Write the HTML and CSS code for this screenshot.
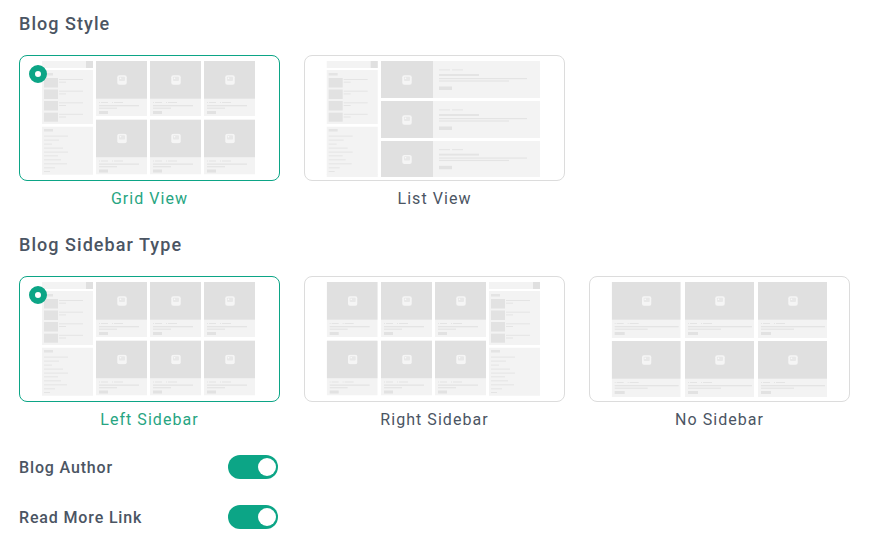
FILE: index.html
```html
<!DOCTYPE html>
<html>

<head>
    <title>Blog Settings</title>
    <link rel="stylesheet" href="styles.css">
</head>

<body>
    <!-- shared pieces of the layout thumbnails -->
    <svg class="sprite" xmlns="http://www.w3.org/2000/svg">
        <symbol id="pic" viewBox="0 0 10 10">
            <rect x="0.3" y="0.3" width="9.4" height="9.4" rx="2" fill="#f5f5f5" />
            <rect x="2" y="1.800" width="6" height="4.2" rx="0.8" fill="#e8e8e8" />
            <circle cx="3.5" cy="3.300" r="0.8" fill="#fafafa" />
        </symbol>

        <symbol id="side" viewBox="0 0 51 116" overflow="visible">
            <rect width="51" height="7" fill="#f3f3f3" />
            <rect x="44" width="7" height="7" fill="#e0e0e0" />
            <rect y="9" width="51" height="54" fill="#f3f3f3" />
            <rect x="2" y="12" width="9" height="2.5" fill="#e4e4e4" />
            <rect x="2" y="17" width="14" height="9.5" fill="#e2e2e2" />
            <rect x="17" y="18" width="24" height="1" fill="#e4e4e4" />
            <rect x="17" y="20.7" width="7" height="1" fill="#e4e4e4" />
            <rect x="2" y="28.5" width="14" height="9.5" fill="#e2e2e2" />
            <rect x="17" y="29.7" width="24" height="1" fill="#e4e4e4" />
            <rect x="17" y="32.4" width="7" height="1" fill="#e4e4e4" />
            <rect x="2" y="40" width="14" height="9.5" fill="#e2e2e2" />
            <rect x="17" y="41.3" width="24" height="1" fill="#e4e4e4" />
            <rect x="17" y="44" width="7" height="1" fill="#e4e4e4" />
            <rect x="2" y="51.7" width="14" height="9" fill="#e2e2e2" />
            <rect x="17" y="52.8" width="24" height="1" fill="#e4e4e4" />
            <rect x="17" y="55.5" width="7" height="1" fill="#e4e4e4" />
            <rect y="65.7" width="51" height="48" fill="#f3f3f3" />
            <rect x="2" y="68" width="9" height="2.5" fill="#e4e4e4" />
            <rect x="2" y="74.6" width="24" height="1" fill="#e4e4e4" />
            <rect x="2" y="78.6" width="15" height="1" fill="#e4e4e4" />
            <rect x="2" y="82.6" width="8" height="1" fill="#e4e4e4" />
            <rect x="2" y="86.6" width="19" height="1" fill="#e4e4e4" />
            <rect x="2" y="90.6" width="24" height="1" fill="#e4e4e4" />
            <rect x="2" y="94.3" width="14" height="1" fill="#e4e4e4" />
            <rect x="2" y="98.3" width="17" height="1" fill="#e4e4e4" />
            <rect x="2" y="102.3" width="23" height="1" fill="#e4e4e4" />
            <rect x="2" y="106.3" width="11" height="1" fill="#e4e4e4" />
            <rect x="2" y="110" width="6" height="1" fill="#e4e4e4" />
        </symbol>

        <symbol id="post" viewBox="0 0 51 55">
            <rect width="51" height="55" fill="#f3f3f3" />
            <rect width="51" height="37.7" fill="#e0e0e0" />
            <use href="#pic" x="21" y="14" width="10" height="10" />
            <rect x="3" y="41" width="1" height="1" fill="#e4e4e4" />
            <rect x="5" y="41" width="7" height="1" fill="#e4e4e4" />
            <rect x="16" y="41" width="1" height="1" fill="#e4e4e4" />
            <rect x="18" y="41" width="9" height="1" fill="#e4e4e4" />
            <rect x="3" y="44" width="40" height="1.3" fill="#e4e4e4" />
            <rect x="3" y="46.6" width="18" height="1.2" fill="#e4e4e4" />
            <rect x="3" y="50" width="9" height="3" fill="#e2e2e2" />
        </symbol>

        <symbol id="post-wide" viewBox="0 0 69 56">
            <rect width="69" height="56" fill="#f3f3f3" />
            <rect width="69" height="37.7" fill="#e0e0e0" />
            <use href="#pic" x="30" y="14" width="10" height="10" />
            <rect x="3" y="41" width="1" height="1" fill="#e4e4e4" />
            <rect x="5" y="41" width="7" height="1" fill="#e4e4e4" />
            <rect x="16" y="41" width="1" height="1" fill="#e4e4e4" />
            <rect x="18" y="41" width="9" height="1" fill="#e4e4e4" />
            <rect x="3" y="44" width="64" height="1.3" fill="#e4e4e4" />
            <rect x="3" y="46.6" width="33" height="1.2" fill="#e4e4e4" />
            <rect x="3" y="50" width="10" height="3" fill="#e2e2e2" />
        </symbol>

        <symbol id="row" viewBox="0 0 159 37" preserveAspectRatio="none">
            <rect width="159" height="37" fill="#f3f3f3" />
            <rect width="52" height="37" fill="#e0e0e0" />
            <use href="#pic" x="21" y="14" width="10" height="10" />
            <rect x="58" y="8.4" width="11" height="1" fill="#e4e4e4" />
            <rect x="71" y="8.4" width="11" height="1" fill="#e4e4e4" />
            <rect x="58" y="13" width="40" height="2" fill="#e4e4e4" />
            <rect x="58" y="17" width="88" height="1.2" fill="#e4e4e4" />
            <rect x="58" y="19.4" width="70" height="1.2" fill="#e4e4e4" />
            <rect x="58" y="25.5" width="13" height="3.5" fill="#e2e2e2" />
        </symbol>

        <symbol id="thumb-left" viewBox="0 0 261 126">
            <use href="#side" x="23" y="6" width="51" height="116" />
            <use href="#post" x="77" y="6" width="51" height="55" />
            <use href="#post" x="131" y="6" width="51" height="55" />
            <use href="#post" x="185" y="6" width="51" height="55" />
            <use href="#post" x="77" y="64.5" width="51" height="55" />
            <use href="#post" x="131" y="64.5" width="51" height="55" />
            <use href="#post" x="185" y="64.5" width="51" height="55" />
        </symbol>

        <symbol id="thumb-right" viewBox="0 0 261 126">
            <use href="#post" x="22.700" y="6" width="51" height="55" />
            <use href="#post" x="77" y="6" width="51" height="55" />
            <use href="#post" x="131" y="6" width="51" height="55" />
            <use href="#post" x="22.700" y="64.500" width="51" height="55" />
            <use href="#post" x="77" y="64.500" width="51" height="55" />
            <use href="#post" x="131" y="64.500" width="51" height="55" />
            <use href="#side" x="185" y="6" width="51" height="116" />
        </symbol>
    </svg>

    <main class="page">
        <h2 class="group-title">Blog Style</h2>
        <div class="options">
            <div class="option option-active">
                <div class="thumb">
                    <span class="radio"></span>
                    <svg class="thumb-art" viewBox="0 0 261 126"><use href="#thumb-left" width="261" height="126" /></svg>
                </div>
                <div class="option-label">Grid View</div>
            </div>
            <div class="option">
                <div class="thumb">
                    <svg class="thumb-art" viewBox="0 0 261 126">
                        <use href="#side" x="22.700" y="6" width="51" height="116" />
                        <rect x="22.700" y="119" width="51" height="3" fill="#f3f3f3" />
                        <use href="#row" x="77" y="6" width="159" height="37" />
                        <use href="#row" x="77" y="46" width="159" height="37" />
                        <use href="#row" x="77" y="86" width="159" height="36" />
                    </svg>
                </div>
                <div class="option-label">List View</div>
            </div>
        </div>

        <h2 class="group-title group-title-next">Blog Sidebar Type</h2>
        <div class="options">
            <div class="option option-active">
                <div class="thumb">
                    <span class="radio"></span>
                    <svg class="thumb-art" viewBox="0 0 261 126"><use href="#thumb-left" width="261" height="126" /></svg>
                </div>
                <div class="option-label">Left Sidebar</div>
            </div>
            <div class="option">
                <div class="thumb">
                    <svg class="thumb-art" viewBox="0 0 261 126"><use href="#thumb-right" width="261" height="126" /></svg>
                </div>
                <div class="option-label">Right Sidebar</div>
            </div>
            <div class="option">
                <div class="thumb">
                    <svg class="thumb-art" viewBox="0 0 261 126">
                        <use href="#post-wide" x="22.700" y="6" width="69" height="56" />
                        <use href="#post-wide" x="96" y="6" width="69" height="56" />
                        <use href="#post-wide" x="169" y="6" width="69" height="56" />
                        <use href="#post-wide" x="22.700" y="65" width="69" height="56" />
                        <use href="#post-wide" x="96" y="65" width="69" height="56" />
                        <use href="#post-wide" x="169" y="65" width="69" height="56" />
                    </svg>
                </div>
                <div class="option-label">No Sidebar</div>
            </div>
        </div>

        <div class="toggles">
            <div class="toggle-row">
                <span class="toggle-label">Blog Author</span>
                <span class="toggle"><span class="toggle-knob"></span></span>
            </div>
            <div class="toggle-row">
                <span class="toggle-label">Read More Link</span>
                <span class="toggle"><span class="toggle-knob"></span></span>
            </div>
        </div>
    </main>
</body>

</html>
```

FILE: styles.css
```css
html, body {
  margin: 0;
  padding: 0;
}

body {
  background-color: #fff;
  color: #4b5563;
  font-family: "Roboto", "Noto Sans", sans-serif;
}

.sprite {
  display: none;
}

.page {
  padding: 12px 19px 0;
}

/* Section headings */
.group-title {
  margin: 0 0 19px;
  font-size: 18px;
  font-weight: 500;
  line-height: 24px;
  letter-spacing: 1.05px;
}

.group-title-next {
  margin-top: 24px;
}

/* Layout option cards */
.options {
  display: flex;
  gap: 24px;
}

.option {
  width: 261px;
}

.thumb {
  position: relative;
  box-sizing: border-box;
  height: 126px;
  border: 1px solid #dcdcdc;
  border-radius: 8px;
  overflow: hidden;
}

.thumb-art {
  display: block;
  width: 261px;
  height: 126px;
  margin: -1px;
}

.option-label {
  margin-top: 8px;
  font-size: 16px;
  line-height: 20px;
  text-align: center;
  letter-spacing: 1.05px;
}

.option-active .thumb {
  border-color: #0ca586;
}

.option-active .option-label {
  color: #27a582;
}

/* Selected marker, sits over the thumbnail */
.radio {
  position: absolute;
  top: 9px;
  left: 9px;
  box-sizing: border-box;
  width: 18px;
  height: 18px;
  border: 6px solid #0ca586;
  border-radius: 50%;
  background-color: #fff;
}

/* Switch rows */
.toggles {
  display: flex;
  flex-direction: column;
  gap: 26px;
  margin-top: 25px;
}

.toggle-row {
  display: flex;
  align-items: center;
  justify-content: space-between;
  width: 259px;
}

.toggle-label {
  font-size: 16px;
  font-weight: 500;
  letter-spacing: 0.85px;
}

.toggle {
  display: flex;
  align-items: center;
  justify-content: flex-end;
  box-sizing: border-box;
  width: 50px;
  height: 24px;
  padding-right: 2px;
  border-radius: 12px;
  background-color: #0ca586;
}

.toggle-knob {
  width: 18px;
  height: 18px;
  border-radius: 50%;
  background-color: #fff;
}
```
